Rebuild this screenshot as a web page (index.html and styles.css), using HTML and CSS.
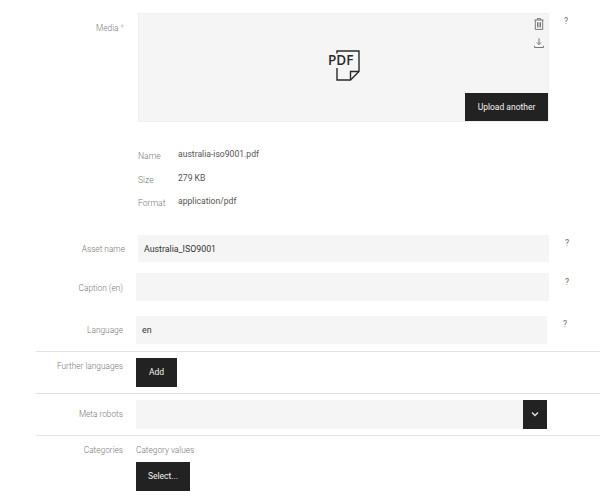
FILE: index.html
```html
<!DOCTYPE html>
<html lang="en">
<head>
<meta charset="utf-8">
<title>Asset</title>
<link rel="stylesheet" href="styles.css">
</head>
<body>
<form class="form">
  <div class="row row-media">
    <div class="label label-media">Media <span class="req">*</span></div>
    <div class="media">
      <div class="media-tools">
        <svg class="tool" width="10" height="12" viewBox="0 0 10 12" fill="none" stroke="#777" stroke-width="1"><path d="M.5 2h9M3.300 2V.6h3.400V2M1.300 2v9.400h7.400V2M3.500 4.200v5.200M5 4.200v5.200M6.500 4.200v5.200"/></svg>
        <svg class="tool" width="10" height="10" viewBox="0 0 10 10" fill="none" stroke="#777" stroke-width="1"><path d="M5 .2v6.300M2.800 4.400 5 6.600l2.200-2.200M.5 7.800v1.700h9V7.800"/></svg>
      </div>
      <svg class="pdf" width="32" height="33" viewBox="0 0 32 33" fill="none" stroke="#2a2a2a" stroke-width="1.400">
        <path d="M9 4.500V2h22v20.500L22.500 31H9V19"/>
        <path d="M31 22.500h-8.500V31"/>
        <text class="pdf-text" x="0" y="15.500">PDF</text>
      </svg>
      <button type="button" class="btn btn-upload">Upload another</button>
    </div>
    <div class="help help-media">?</div>
  </div>

  <dl class="meta">
    <div class="meta-row"><dt>Name</dt><dd>australia-iso9001.pdf</dd></div>
    <div class="meta-row"><dt>Size</dt><dd>279 KB</dd></div>
    <div class="meta-row"><dt>Format</dt><dd>application/pdf</dd></div>
  </dl>

  <div class="row row-asset">
    <div class="label label-center">Asset name</div>
    <div class="input">Australia_ISO9001</div>
    <div class="help">?</div>
  </div>
  <div class="row row-caption">
    <div class="label label-center">Caption (en)</div>
    <div class="input"></div>
    <div class="help">?</div>
  </div>
  <div class="row row-language">
    <div class="label label-center">Language</div>
    <div class="input">en</div>
    <div class="help">?</div>
  </div>

  <div class="section section-languages">
    <div class="label label-top">Further languages</div>
    <button type="button" class="btn btn-add">Add</button>
  </div>
  <div class="section section-robots">
    <div class="label label-center">Meta robots</div>
    <div class="input select">
      <span class="select-btn">
        <svg width="8" height="6" viewBox="0 0 8 6" fill="none" stroke="#e6e6e6" stroke-width="1.300"><path d="M1 1.500 4 4.500l3-3"/></svg>
      </span>
    </div>
  </div>
  <div class="section section-categories">
    <div class="label label-cat">Categories</div>
    <div class="cat">
      <div class="cat-title">Category values</div>
      <button type="button" class="btn btn-select">Select...</button>
    </div>
  </div>
</form>
</body>
</html>
```

FILE: styles.css
```css
* { box-sizing: border-box; }
html, body { margin: 0; padding: 0; background: #fff; }
body {
  width: 600px;
  height: 502px;
  overflow: hidden;
  font-family: Roboto, "Liberation Sans", sans-serif;
  font-size: 8.600px;
  color: #444;
}
.form { padding-top: 13px; }

.row { display: flex; align-items: flex-start; }
.label { color: #777; font-weight: 300; text-align: right; font-size: 8.300px; }
.help { color: #666; font-size: 8.500px; line-height: 10px; }

.row-media { padding-left: 36px; }
.label-media { width: 88px; padding-top: 10px; line-height: 10px; }
.req { color: #b9a99a; }
.media {
  position: relative;
  width: 411px;
  height: 109px;
  margin-left: 14px;
  background: #f5f5f5;
  border: 1px solid #efefef;
  display: flex;
  align-items: center;
  justify-content: center;
  padding-bottom: 5px;
}
.media-tools {
  position: absolute;
  top: 4px;
  right: 4px;
  display: flex;
  flex-direction: column;
  align-items: center;
  gap: 8px;
}
.tool { display: block; }
.pdf { display: block; margin-left: 1px; }
.pdf-text {
  font-family: "Open Sans", "Liberation Sans", sans-serif;
  font-size: 13.500px;
  font-weight: 600;
  fill: #2a2a2a;
  stroke: none;
}
.help-media { margin-left: 15px; margin-top: 3px; }

.btn {
  border: 0;
  border-radius: 0;
  background: #222;
  color: #f2f2f2;
  font-family: Roboto, "Liberation Sans", sans-serif;
  font-size: 8.500px;
  padding: 0;
  margin: 0;
}
.btn-upload {
  position: absolute;
  right: 0;
  bottom: 0;
  width: 83px;
  height: 28px;
}
.btn-add { width: 41px; height: 29px; }
.btn-select { display: block; width: 54px; height: 29px; margin-top: 6px; }

.meta { margin: 23px 0 0 138px; }
.meta-row { display: flex; height: 23.500px; align-items: flex-start; }
.meta dt { width: 40px; padding-top: 6px; color: #777; font-weight: 300; line-height: 11px; }
.meta dd { margin: 0; padding-top: 4px; line-height: 11px; color: #555; }

.input {
  background: #f5f5f5;
  font-size: 8.800px;
  color: #333;
  display: flex;
  align-items: center;
  padding: 1px 0 0 6px;
}

.row-asset { margin-top: 19px; height: 27px; }
.row-asset .label { width: 125px; }
.row-asset .input { width: 411px; height: 27px; margin-left: 13px; }
.row-asset .help { margin: 3px 0 0 16px; }
.label-center { line-height: 29px; }

.row-caption { margin-top: 11px; height: 28px; }
.row-caption .label { width: 123px; line-height: 30px; }
.row-caption .input { width: 413px; height: 28px; margin-left: 13px; }
.row-caption .help { margin: 4px 0 0 16px; }

.row-language { margin-top: 15px; height: 28px; }
.row-language .label { width: 123px; }
.row-language .input { width: 411px; height: 28px; margin-left: 13px; }
.row-language .help { margin: 3px 0 0 16px; }

.section {
  margin-left: 36px;
  border-top: 1px solid #e4e4e4;
  display: flex;
  align-items: flex-start;
}
.section .label { width: 87px; flex: none; }
.section-languages { margin-top: 7px; height: 42px; padding-top: 6px; }
.label-top { line-height: 12px; padding-top: 2px; }
.btn-add { margin-left: 13px; }
.section-robots { height: 42px; padding-top: 6px; }
.section-robots .label { line-height: 29px; }
.select { position: relative; width: 411px; height: 29px; margin-left: 13px; }
.select-btn {
  position: absolute;
  right: 0;
  top: 0;
  width: 24px;
  height: 29px;
  background: #222;
  display: flex;
  align-items: center;
  justify-content: center;
}
.section-categories { padding-top: 8px; border-top-color: #e4e4e4; }
.label-cat { line-height: 12px; }
.cat { margin-left: 13px; }
.cat-title { color: #777; font-weight: 300; line-height: 12px; font-size: 8.300px; }
```
